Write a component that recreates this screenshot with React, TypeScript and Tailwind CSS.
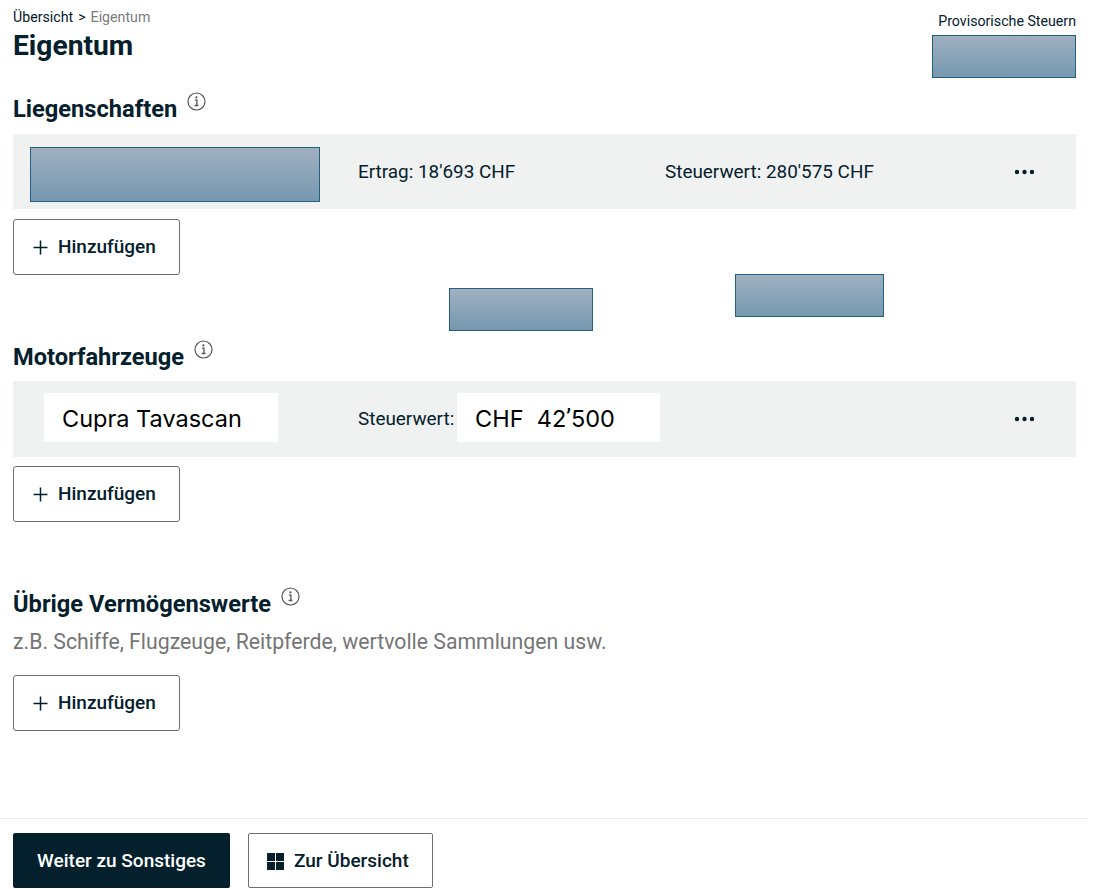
import React from "react";

const INK = "text-[#03202c]";

function InfoIcon() {
  return (
    <svg width="19" height="19" viewBox="0 0 19 19" fill="none" className="shrink-0">
      <circle cx="9.5" cy="9.5" r="8.5" stroke="#555555" strokeWidth="1.2" />
      <path d="M7.9 8.1h2v5.2M7.6 13.5h3.8" stroke="#555555" strokeWidth="1.3" />
      <circle cx="9.4" cy="5.4" r="1.1" fill="#555555" />
    </svg>
  );
}

function Dots() {
  return (
    <svg width="21" height="6" viewBox="0 0 21 6" className="shrink-0">
      <circle cx="3" cy="3" r="2.2" fill="#03202c" />
      <circle cx="10.5" cy="3" r="2.2" fill="#03202c" />
      <circle cx="18" cy="3" r="2.2" fill="#03202c" />
    </svg>
  );
}

function Heading({ children }: { children: React.ReactNode }) {
  return (
    <div className="flex items-start h-[30px] gap-[10px]">
      <h2 className={`text-[23.65px] leading-[30px] font-bold pt-[1px] ${INK}`}>{children}</h2>
      <div className="mt-[-1px]">
        <InfoIcon />
      </div>
    </div>
  );
}

function AddButton() {
  return (
    <button className={`flex items-center w-[167px] h-[56px] pl-[19px] gap-[10px] bg-white border border-[#6e6e6e] rounded-[3px] text-[19px] font-medium ${INK}`}>
      <svg width="15" height="15" viewBox="0 0 15 15" fill="none">
        <path d="M7.5 0.5v14M0.5 7.5h14" stroke="#03202c" strokeWidth="1.5" />
      </svg>
      Hinzufügen
    </button>
  );
}

function Redact({ className }: { className: string }) {
  return (
    <div className={`bg-gradient-to-b from-[#a0b0c0] to-[#7598b0] border border-[#23607f] ${className}`} />
  );
}

export default function App() {
  return (
    <div className="relative w-[1093px] h-[889px] bg-white overflow-hidden font-['Roboto',sans-serif]">
      <main className="pl-[13px] pr-[17px] pt-[8px]">
        <header className="flex justify-between h-[85px]">
          <div>
            <div className="flex gap-[5px] text-[14.2px] leading-[18px] text-[#7b7b7b]">
              <span className={INK}>Übersicht</span>
              <span className={INK}>&gt;</span>
              <span>Eigentum</span>
            </div>
            <h1 className={`text-[28.2px] leading-[40px] font-bold ${INK}`}>Eigentum</h1>
          </div>
          <div className="flex flex-col items-end pt-[5px]">
            <div className={`text-[14.2px] leading-[16px] ${INK}`}>Provisorische Steuern</div>
            <Redact className="w-[144px] h-[43px] mt-[6px]" />
          </div>
        </header>

        <section>
          <Heading>Liegenschaften</Heading>
          <div className={`flex items-center h-[75px] mt-[11px] bg-[#f0f2f2] pl-[17px] pr-[41px] pt-[1px] text-[18.9px] ${INK}`}>
            <Redact className="w-[290px] h-[55px] self-start mt-[12px]" />
            <span className="ml-[38px] w-[307px]">Ertrag: 18'693 CHF</span>
            <span className="flex-1">Steuerwert: 280'575 CHF</span>
            <Dots />
          </div>
          <div className="mt-[10px]">
            <AddButton />
          </div>
        </section>

        <section className="mt-[66px]">
          <Heading>Motorfahrzeuge</Heading>
          <div className={`flex items-center h-[76px] mt-[10px] bg-[#f0f2f2] pl-[31px] pr-[41px] text-[18.9px] ${INK}`}>
            <div className="flex items-center w-[234px] h-[49px] mb-[4px] pl-[18px] pt-[3px] bg-white text-[23.5px] text-black font-['Inter',sans-serif] font-normal">
              Cupra Tavascan
            </div>
            <span className="ml-[80px] w-[99px] whitespace-nowrap">Steuerwert:</span>
            <div className="flex items-center w-[203px] h-[49px] mb-[4px] pl-[18px] pt-[3px] bg-white text-[23.5px] whitespace-pre text-black font-['Inter',sans-serif] font-normal">
              CHF  42<span className="font-['Roboto',sans-serif]">’</span>500
            </div>
            <span className="flex-1" />
            <Dots />
          </div>
          <div className="mt-[9px]">
            <AddButton />
          </div>
        </section>

        <section className="mt-[66px]">
          <Heading>Übrige Vermögenswerte</Heading>
          <p className="mt-[9px] text-[21.25px] leading-[30px] text-[#757575]">
            z.B. Schiffe, Flugzeuge, Reitpferde, wertvolle Sammlungen usw.
          </p>
          <div className="mt-[18px]">
            <AddButton />
          </div>
        </section>
      </main>

      <footer className="absolute left-0 top-[818px] w-[1088px] h-[71px] border-t border-[#e8eaea] pl-[13px] pt-[14px] flex gap-[18px]">
        <button className="w-[217px] h-[55px] pt-[2px] bg-[#03202c] rounded-[2px] text-white text-[19px] font-medium">
          Weiter zu Sonstiges
        </button>
        <button className={`flex items-center pl-[18px] pt-[2px] gap-[10px] w-[185px] h-[55px] bg-white border border-[#6e6e6e] rounded-[2px] text-[19px] font-medium ${INK}`}>
          <svg width="17" height="17" viewBox="0 0 17 17" fill="#03202c">
            <rect x="0" y="0" width="8" height="8" />
            <rect x="9" y="0" width="8" height="8" />
            <rect x="0" y="9" width="8" height="8" />
            <rect x="9" y="9" width="8" height="8" />
          </svg>
          Zur Übersicht
        </button>
      </footer>

      <Redact className="absolute left-[449px] top-[288px] w-[144px] h-[43px]" />
      <Redact className="absolute left-[735px] top-[274px] w-[149px] h-[43px]" />
    </div>
  );
}
